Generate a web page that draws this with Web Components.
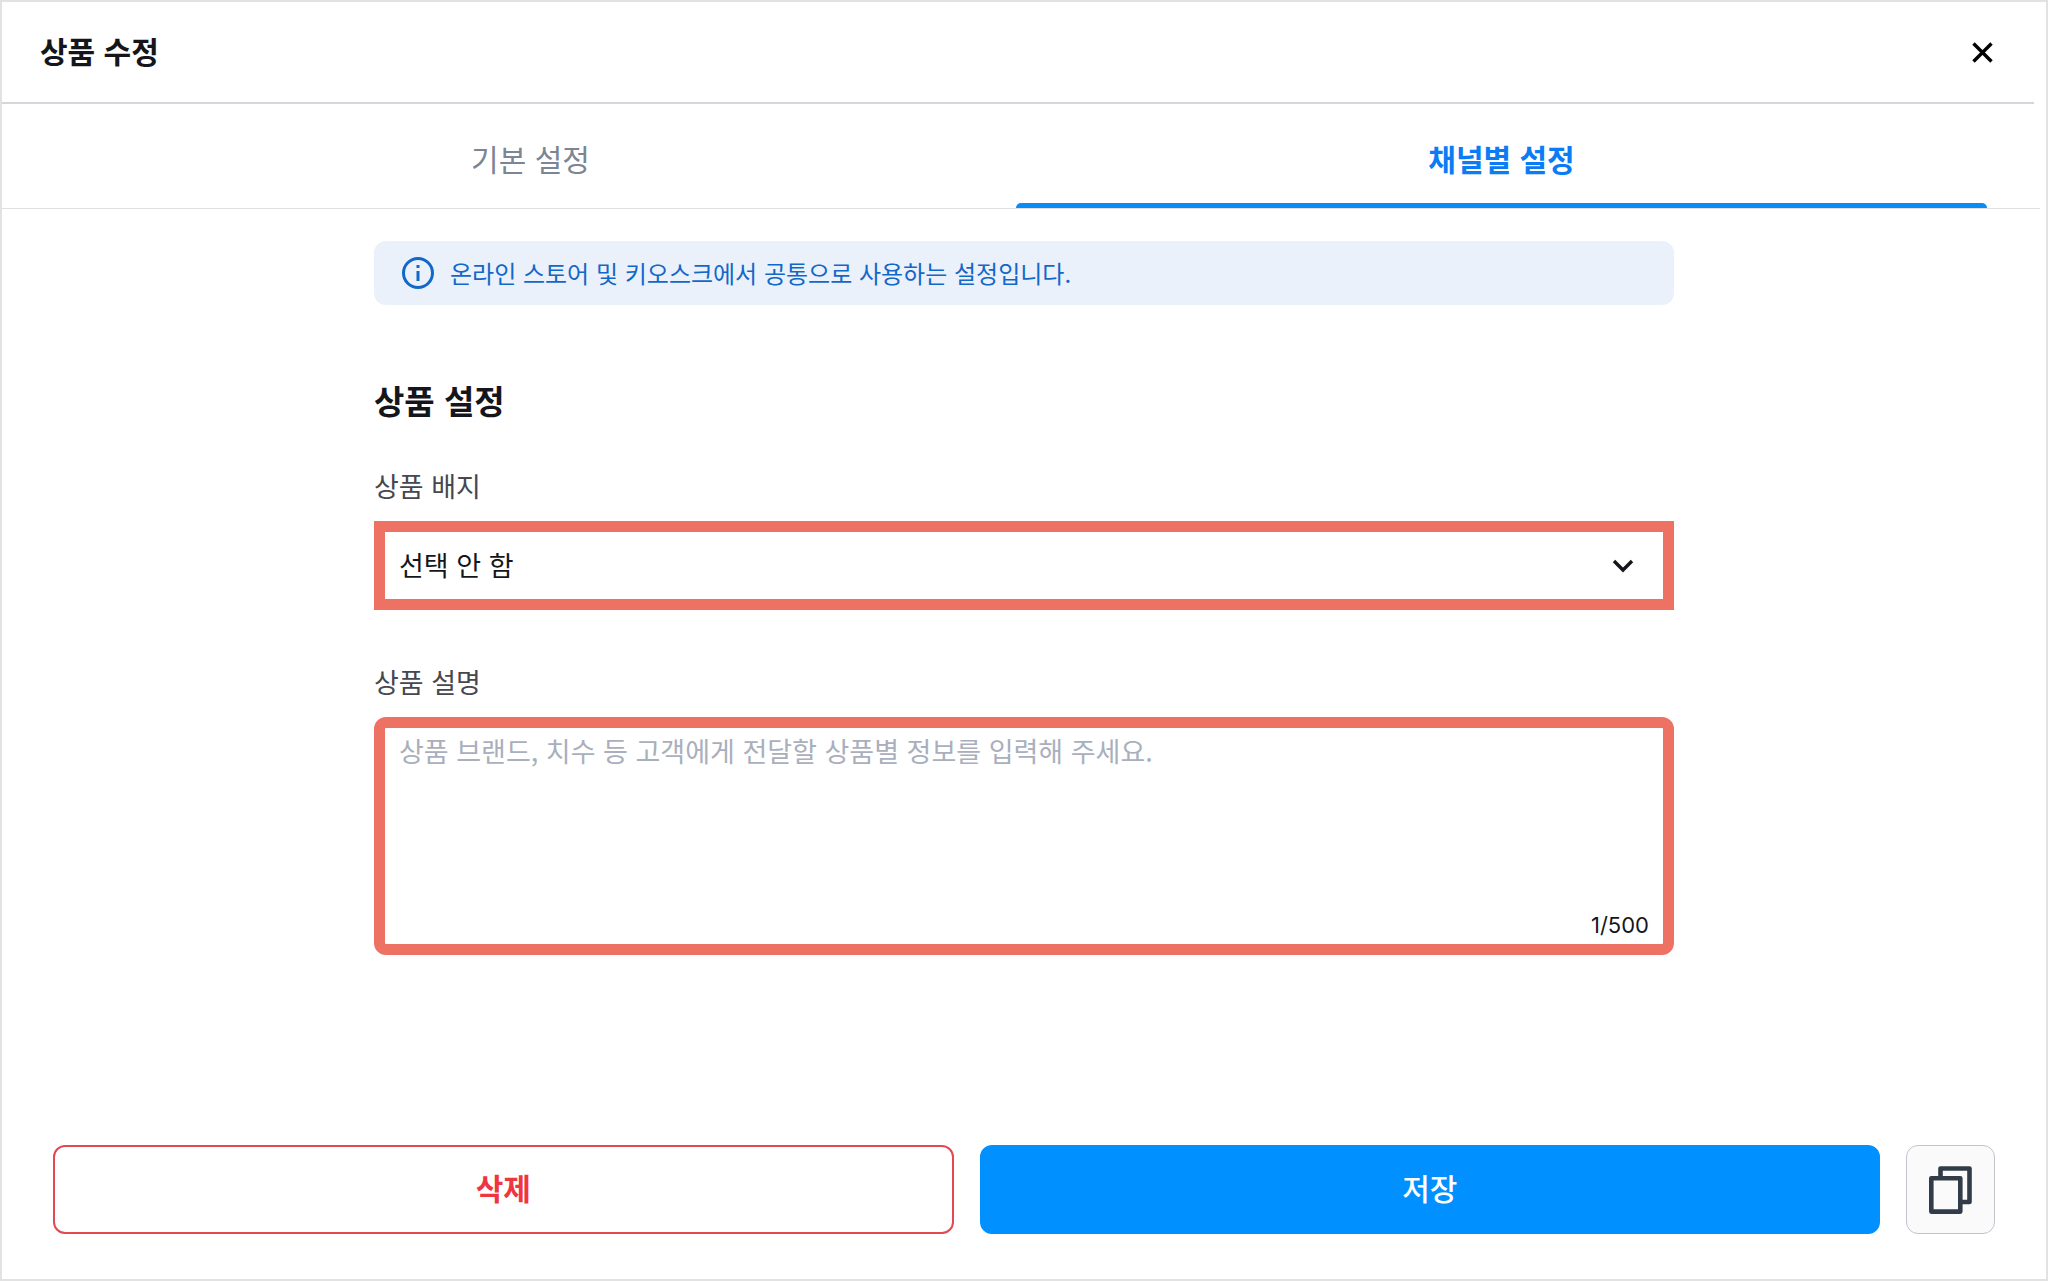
<!DOCTYPE html>
<html lang="ko">
  <head>
    <meta charset="UTF-8" />
    <meta name="viewport" content="width=device-width, initial-scale=1.0" />
    <title>상품 수정</title>
    <style>
      * {
        box-sizing: border-box;
      }

      body {
        margin: 0;
        background: #fff;
        color: #15161c;
        font-family: "Noto Sans CJK KR", sans-serif;
      }
    </style>
  </head>

  <body>
    <product-dialog>
      <dialog-header slot="header">상품 수정</dialog-header>
      <tab-bar slot="tabs">
        <tab-item>기본 설정</tab-item>
        <tab-item active>채널별 설정</tab-item>
      </tab-bar>
      <info-banner>온라인 스토어 및 키오스크에서 공통으로 사용하는 설정입니다.</info-banner>
      <form-section>
        <span slot="title">상품 설정</span>
        <select-field label="상품 배지" value="선택 안 함"></select-field>
        <textarea-field
          label="상품 설명"
          placeholder="상품 브랜드, 치수 등 고객에게 전달할 상품별 정보를 입력해 주세요."
          count="1/500"
        ></textarea-field>
      </form-section>
      <action-button slot="footer" kind="danger">삭제</action-button>
      <action-button slot="footer" kind="primary">저장</action-button>
      <copy-button slot="footer"></copy-button>
    </product-dialog>

    <script>
      const reset = `
        * { box-sizing: border-box; }
        button, select, textarea { font: inherit; color: inherit; margin: 0; }
        button { cursor: pointer; }
      `;

      class BaseElement extends HTMLElement {
        constructor() {
          super();
          this.attachShadow({ mode: "open" });
        }

        connectedCallback() {
          this.shadowRoot.innerHTML = `<style>${reset}</style>${this.render()}`;
        }
      }

      class ProductDialog extends BaseElement {
        render() {
          return `
            <style>
              :host {
                display: flex;
                flex-direction: column;
                min-height: 100vh;
                border: 2px solid #e2e2e2;
              }
              main {
                flex: 1;
                width: 100%;
                max-width: 1300px;
                margin: 0 auto;
                padding: 32px 0;
              }
              footer {
                display: flex;
                gap: 26px;
                padding: 0 51px 45px;
              }
            </style>
            <slot name="header"></slot>
            <slot name="tabs"></slot>
            <main><slot></slot></main>
            <footer><slot name="footer"></slot></footer>
          `;
        }
      }

      class DialogHeader extends BaseElement {
        render() {
          return `
            <style>
              :host { display: block; }
              header {
                display: flex;
                align-items: center;
                justify-content: space-between;
                height: 102px;
                margin-right: 12px;
                padding: 0 35px 0 38px;
                border-bottom: 2px solid #d5d5dc;
              }
              h1 { margin: 0; padding-bottom: 4px; font-size: 30px; line-height: 40px; font-weight: 700; }
              button {
                display: flex;
                padding: 4px;
                border: 0;
                background: none;
                color: #000;
              }
            </style>
            <header>
              <h1><slot></slot></h1>
              <button type="button" aria-label="닫기">
                <svg width="24" height="24" viewBox="0 0 24 24" fill="none" stroke="currentColor" stroke-width="3.4">
                  <path d="M2.5 3.5L20.5 21.5M20.5 3.5L2.5 21.5" />
                </svg>
              </button>
            </header>
          `;
        }
      }

      class TabBar extends BaseElement {
        render() {
          return `
            <style>
              :host { display: block; }
              nav {
                display: flex;
                height: 105px;
                margin-right: 6px;
                padding: 0 53px 0 43px;
                border-bottom: 1px solid #dfe0e4;
              }
            </style>
            <nav role="tablist"><slot></slot></nav>
          `;
        }
      }

      class TabItem extends BaseElement {
        render() {
          const active = this.hasAttribute("active");
          return `
            <style>
              :host { display: flex; flex: 1; }
              button {
                flex: 1;
                display: flex;
                flex-direction: column;
                padding: 0;
                border: 0;
                background: none;
                color: #7b8593;
                font-size: 30px;
                line-height: 40px;
              }
              span {
                flex: 1;
                display: flex;
                align-items: center;
                justify-content: center;
                padding-top: 8px;
                width: 100%;
              }
              i { width: 100%; height: 5px; border-radius: 5px 5px 0 0; }
              :host([active]) button { color: #0a7cf5; font-weight: 700; }
              :host([active]) i { background: #098cf6; }
            </style>
            <button type="button" role="tab" aria-selected="${active}">
              <span><slot></slot></span>
              <i></i>
            </button>
          `;
        }
      }

      class InfoBanner extends BaseElement {
        render() {
          return `
            <style>
              :host {
                display: flex;
                align-items: center;
                gap: 16px;
                height: 64px;
                padding: 0 28px;
                border-radius: 12px;
                background: #eaf1fb;
                color: #1268c8;
                font-size: 24px;
                line-height: 32px;
              }
              svg { flex: none; }
            </style>
            <svg width="32" height="32" viewBox="0 0 32 32" fill="none" stroke="currentColor" stroke-width="3">
              <circle cx="16" cy="16" r="14.5" />
              <path d="M16 14V24M16 8V11" />
            </svg>
            <span><slot></slot></span>
          `;
        }
      }

      class FormSection extends BaseElement {
        render() {
          return `
            <style>
              :host { display: block; margin-top: 71px; }
              h2 { margin: 0 0 44px; font-size: 33px; line-height: 48px; font-weight: 700; }
              div { display: flex; flex-direction: column; gap: 54px; }
            </style>
            <section>
              <h2><slot name="title"></slot></h2>
              <div><slot></slot></div>
            </section>
          `;
        }
      }

      const fieldStyle = `
        :host { display: block; font-size: 27px; line-height: 36px; }
        label { display: block; margin-bottom: 17px; color: #46474f; }
        .box { border: 11px solid #ed7263; }
      `;

      class SelectField extends BaseElement {
        render() {
          return `
            <style>
              ${fieldStyle}
              .box { display: grid; align-items: center; height: 89px; }
              select {
                grid-area: 1 / 1;
                width: 100%;
                height: 100%;
                padding: 0 14px 2px;
                border: 0;
                appearance: none;
                background: #fff;
              }
              svg {
                grid-area: 1 / 1;
                justify-self: end;
                margin-right: 28px;
                pointer-events: none;
              }
            </style>
            <label for="control">${this.getAttribute("label")}</label>
            <div class="box">
              <select id="control">
                <option>${this.getAttribute("value")}</option>
              </select>
              <svg width="24" height="24" viewBox="0 0 24 24" fill="none" stroke="currentColor" stroke-width="3.4">
                <path d="M3 7L12 16L21 7" />
              </svg>
            </div>
          `;
        }
      }

      class TextareaField extends BaseElement {
        render() {
          return `
            <style>
              ${fieldStyle}
              .box {
                display: flex;
                flex-direction: column;
                height: 238px;
                border-radius: 12px;
              }
              textarea {
                flex: 1;
                width: 100%;
                padding: 5px 14px;
                border: 0;
                outline: 0;
                resize: none;
                background: none;
              }
              textarea::placeholder { color: #a9afbc; opacity: 1; }
              output {
                align-self: flex-end;
                padding: 0 14px 3px;
                font-family: Inter, "Noto Sans CJK KR", sans-serif;
                font-size: 22px;
                line-height: 32px;
              }
            </style>
            <label for="control">${this.getAttribute("label")}</label>
            <div class="box">
              <textarea id="control" placeholder="${this.getAttribute("placeholder")}"></textarea>
              <output for="control">${this.getAttribute("count")}</output>
            </div>
          `;
        }
      }

      class ActionButton extends BaseElement {
        render() {
          return `
            <style>
              :host { display: flex; flex: 1; }
              button {
                flex: 1;
                height: 89px;
                padding: 0 0 6px;
                border: 2px solid #0090ff;
                border-radius: 12px;
                background: #0090ff;
                color: #fff;
                font-size: 30px;
                line-height: 40px;
                font-weight: 500;
              }
              :host([kind="danger"]) button {
                border-color: #e5484f;
                background: #fff;
                color: #ef3540;
                font-weight: 700;
              }
            </style>
            <button type="button"><slot></slot></button>
          `;
        }
      }

      class CopyButton extends BaseElement {
        render() {
          return `
            <style>
              :host { display: block; flex: none; }
              button {
                display: flex;
                align-items: center;
                justify-content: center;
                width: 89px;
                height: 89px;
                padding: 0;
                border: 1px solid #c4c3cd;
                border-radius: 12px;
                background: #fafafa;
                color: #323c49;
              }
            </style>
            <button type="button" aria-label="복사">
              <svg width="43" height="48" viewBox="0 0 43 48" fill="none" stroke="currentColor" stroke-width="4.6" stroke-linejoin="round">
                <path d="M11.5 11V2.5H40.5V36H32" />
                <rect x="2.3" y="12.2" width="29" height="33.4" />
              </svg>
            </button>
          `;
        }
      }

      customElements.define("product-dialog", ProductDialog);
      customElements.define("dialog-header", DialogHeader);
      customElements.define("tab-bar", TabBar);
      customElements.define("tab-item", TabItem);
      customElements.define("info-banner", InfoBanner);
      customElements.define("form-section", FormSection);
      customElements.define("select-field", SelectField);
      customElements.define("textarea-field", TextareaField);
      customElements.define("action-button", ActionButton);
      customElements.define("copy-button", CopyButton);
    </script>
  </body>
</html>
